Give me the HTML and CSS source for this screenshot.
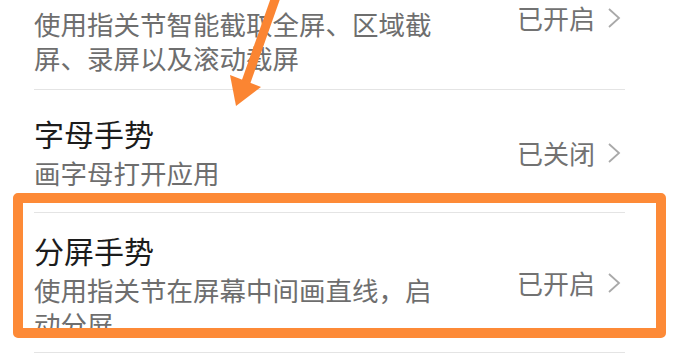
FILE: index.html
```html
<!DOCTYPE html>
<html lang="zh-CN">
<head>
<meta charset="utf-8">
<title>手势设置</title>
<link rel="stylesheet" href="styles.css">
</head>
<body>
<div class="screen">
  <ul class="list">
    <li class="row row-first">
      <div class="text">
        <p class="desc">使用指关节智能截取全屏、区域截屏、录屏以及滚动截屏</p>
      </div>
      <div class="status status-top">
        <span>已开启</span>
        <svg class="chev" viewBox="0 0 16 22" width="16" height="22"><path d="M3 2 L13 11 L3 20" fill="none" stroke="#a9a9a9" stroke-width="1.8"/></svg>
      </div>
    </li>
    <li class="row row-mid">
      <div class="text">
        <p class="title">字母手势</p>
        <p class="desc">画字母打开应用</p>
      </div>
      <div class="status">
        <span>已关闭</span>
        <svg class="chev" viewBox="0 0 16 22" width="16" height="22"><path d="M3 2 L13 11 L3 20" fill="none" stroke="#a9a9a9" stroke-width="1.8"/></svg>
      </div>
    </li>
    <li class="row row-last">
      <div class="text">
        <p class="title">分屏手势</p>
        <p class="desc">使用指关节在屏幕中间画直线，启动分屏</p>
      </div>
      <div class="status status-last">
        <span>已开启</span>
        <svg class="chev" viewBox="0 0 16 22" width="16" height="22"><path d="M3 2 L13 11 L3 20" fill="none" stroke="#a9a9a9" stroke-width="1.8"/></svg>
      </div>
    </li>
  </ul>
  <div class="highlight"></div>
  <svg class="arrow" viewBox="0 0 678 355" width="678" height="355">
    <line x1="277" y1="-6" x2="246" y2="82" stroke="#fb8532" stroke-width="9" stroke-linecap="butt"/>
    <polygon points="230,75 261,87 236,106" fill="#fb8532"/>
  </svg>
</div>
</body>
</html>
```
FILE: styles.css
```css
* { box-sizing: border-box; }
html, body {
  margin: 0;
  padding: 0;
  background: #ffffff;
}
body {
  font-family: "Noto Sans CJK SC", "Noto Sans", sans-serif;
  width: 678px;
  height: 355px;
  overflow: hidden;
}
.screen {
  position: relative;
  width: 678px;
  height: 355px;
  overflow: hidden;
}
.list {
  list-style: none;
  margin: 0;
  padding: 0 53px 0 34px;
}
.row {
  display: flex;
  align-items: center;
  justify-content: space-between;
  border-bottom: 1px solid #e4e4e4;
}
.row-first {
  align-items: flex-start;
  padding-top: 7px;
  padding-bottom: 14px;
}
.row-mid {
  padding-top: 25px;
  padding-bottom: 22px;
}
.row-last {
  padding-top: 19px;
  padding-bottom: 11px;
}
.text {
  width: 410px;
}
p { margin: 0; }
.title {
  font-size: 30px;
  line-height: 36px;
  color: #1c1c1c;
  margin-bottom: 5px;
}
.desc {
  font-size: 26.5px;
  line-height: 34px;
  color: #6e6e6e;
}
.status {
  display: flex;
  align-items: center;
  font-size: 26px;
  line-height: 34px;
  color: #727272;
}
.status-top {
  margin-top: -6px;
}
.status-last {
  margin-top: -8px;
}
.chev {
  display: block;
  margin-left: 11px;
  margin-right: 3px;
}
.highlight {
  position: absolute;
  left: 13px;
  top: 193px;
  width: 653px;
  height: 145px;
  border: 10px solid #fd8a37;
  border-radius: 5px;
}
.arrow {
  position: absolute;
  left: 0;
  top: 0;
}
```
